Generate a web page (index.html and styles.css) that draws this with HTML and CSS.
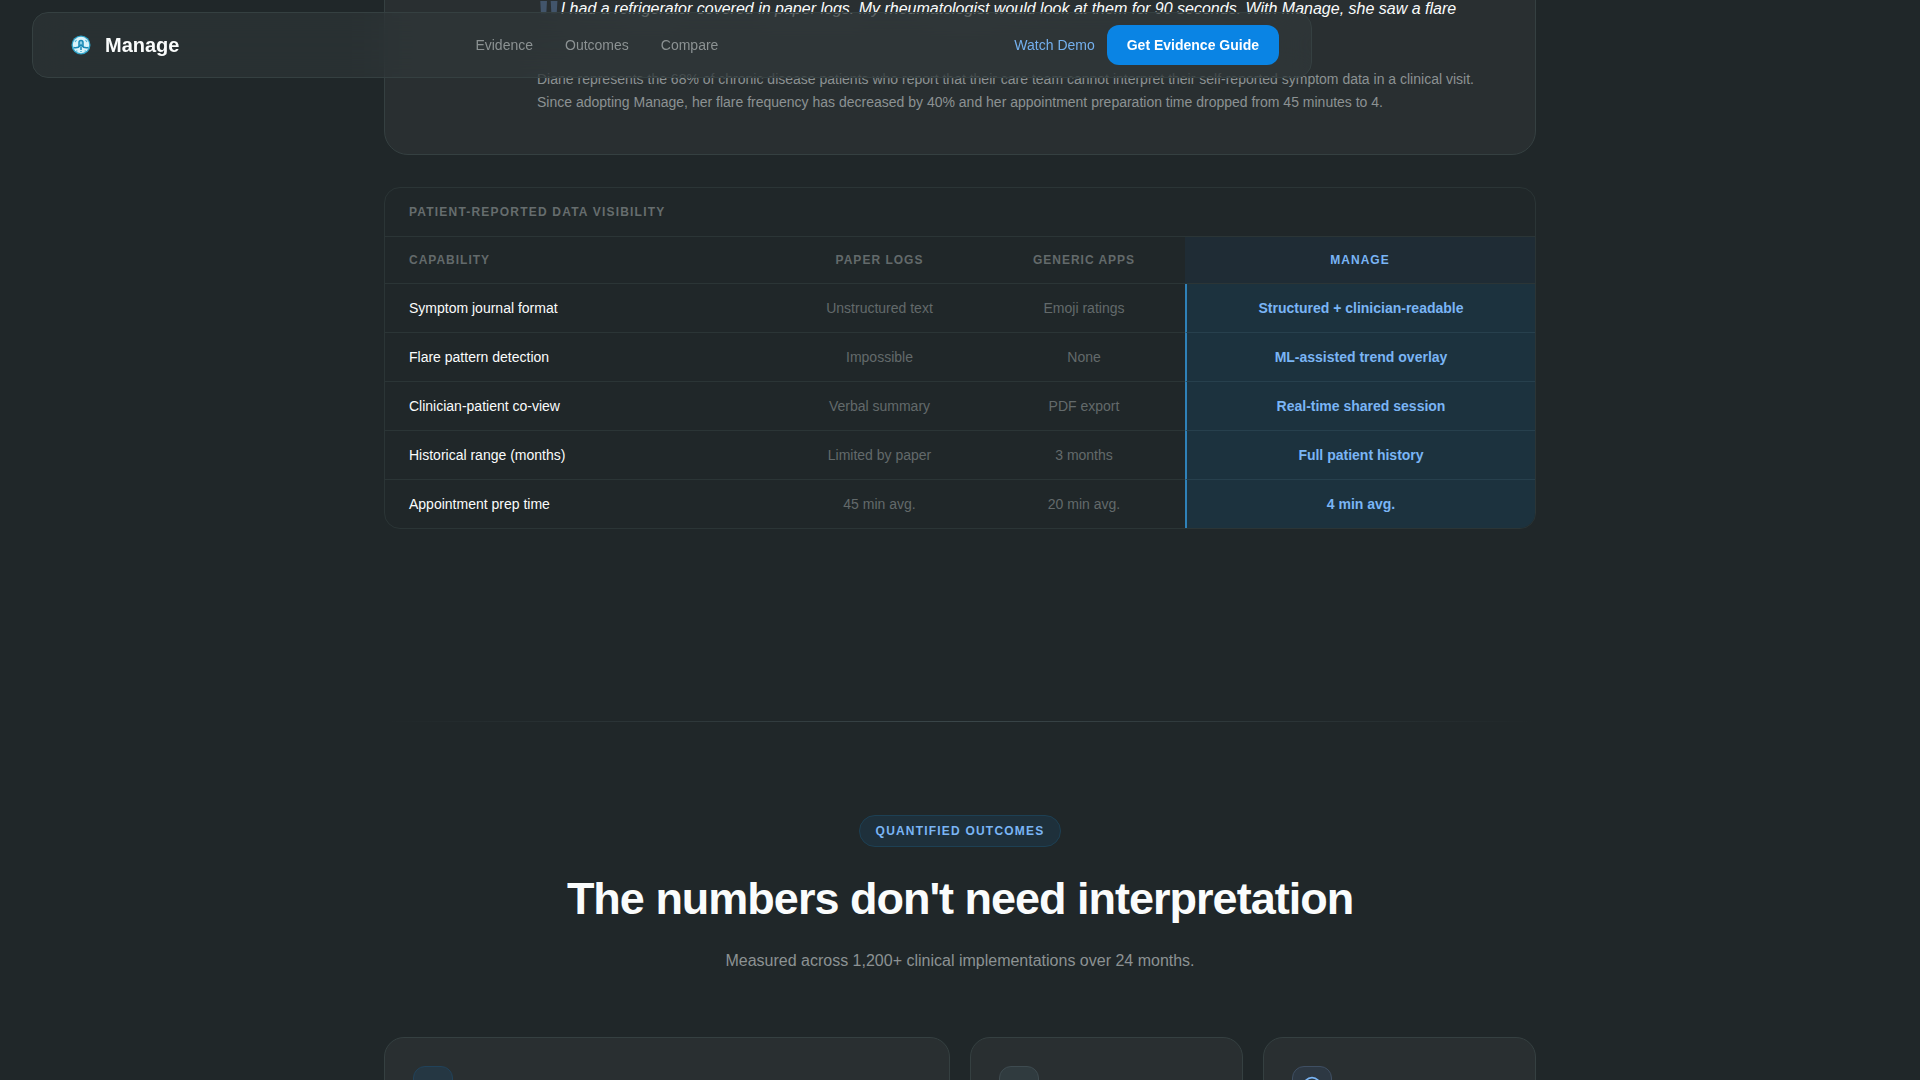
FILE: index.html
```html
<!DOCTYPE html>
<html lang="en">
<head>
    <meta charset="UTF-8">
    <meta name="viewport" content="width=device-width, initial-scale=1.0">
    <title>Manage</title>
    <link rel="stylesheet" href="styles.css">
</head>

<body>
    <header class="nav">
        <a href="#" class="brand">
            <svg class="brand-icon" viewBox="0 0 32 32" aria-hidden="true">
                <circle cx="16" cy="16" r="9.5" fill="#2fa3c9"/>
                <circle cx="16" cy="16" r="8.2" fill="#d9f3fa"/>
                <path d="M14 18v-4.500a2 2 0 0 1 4 0V18" fill="#8fd0e6" stroke="#1687b4" stroke-width="1.500"/>
                <path d="M8.500 18.500c3 .8 5.500 0 7.500-2.500 2 2.500 4.500 3.300 7.500 2.500M16 18v3" fill="none" stroke="#1687b4" stroke-width="1.500"/>
                <path d="M11 22h1.500M15.200 22.500h1.600M19.500 22H21M10 13l1.500-2M22 13l-1.500-2" fill="none" stroke="#49b3d6" stroke-width="1.100"/>
            </svg>
            <span>Manage</span>
        </a>
        <nav class="nav-links">
            <a href="#evidence">Evidence</a>
            <a href="#outcomes">Outcomes</a>
            <a href="#compare">Compare</a>
        </nav>
        <div class="nav-actions">
            <a href="#demo" class="demo-link">Watch Demo</a>
            <button type="button" class="btn-primary">Get Evidence Guide</button>
        </div>
    </header>

    <main class="container">
        <section class="story" id="evidence">
            <p class="story-quote"><span class="quote-mark">"</span>I had a refrigerator covered in paper logs. My rheumatologist would look at them for 90 seconds. With Manage, she saw a flare</p>
            <p class="story-text">Diane represents the 68% of chronic disease patients who report that their care team cannot interpret their self-reported symptom data in a clinical visit. Since adopting Manage, her flare frequency has decreased by 40% and her appointment preparation time dropped from 45 minutes to 4.</p>
        </section>

        <section class="compare" id="compare">
            <h3 class="compare-title">Patient-Reported Data Visibility</h3>
            <table class="compare-table">
                <thead>
                    <tr>
                        <th class="col-capability">Capability</th>
                        <th class="col-paper">Paper Logs</th>
                        <th>Generic Apps</th>
                        <th class="col-manage">Manage</th>
                    </tr>
                </thead>
                <tbody>
                    <tr>
                        <td>Symptom journal format</td>
                        <td>Unstructured text</td>
                        <td>Emoji ratings</td>
                        <td>Structured + clinician-readable</td>
                    </tr>
                    <tr>
                        <td>Flare pattern detection</td>
                        <td>Impossible</td>
                        <td>None</td>
                        <td>ML-assisted trend overlay</td>
                    </tr>
                    <tr>
                        <td>Clinician-patient co-view</td>
                        <td>Verbal summary</td>
                        <td>PDF export</td>
                        <td>Real-time shared session</td>
                    </tr>
                    <tr>
                        <td>Historical range (months)</td>
                        <td>Limited by paper</td>
                        <td>3 months</td>
                        <td>Full patient history</td>
                    </tr>
                    <tr>
                        <td>Appointment prep time</td>
                        <td>45 min avg.</td>
                        <td>20 min avg.</td>
                        <td>4 min avg.</td>
                    </tr>
                </tbody>
            </table>
        </section>

        <div class="divider"></div>

        <section class="outcomes" id="outcomes">
            <span class="pill">Quantified Outcomes</span>
            <h2>The numbers don't need interpretation</h2>
            <p class="outcomes-sub">Measured across 1,200+ clinical implementations over 24 months.</p>

            <div class="cards">
                <div class="card card-wide">
                    <div class="card-icon icon-blue"></div>
                </div>
                <div class="card">
                    <div class="card-icon icon-slate"></div>
                </div>
                <div class="card">
                    <div class="card-icon icon-navy">
                        <svg viewBox="0 0 24 24" width="20" height="20" fill="none" stroke="#7ab5f5" stroke-width="2" aria-hidden="true">
                            <circle cx="12" cy="12" r="10"/>
                            <path d="M12 6v6l4 2"/>
                        </svg>
                    </div>
                </div>
            </div>
        </section>
    </main>
</body>
</html>
```
FILE: styles.css
```css
* {
    margin: 0;
    padding: 0;
    box-sizing: border-box;
}

html {
    overflow: hidden;
}

body {
    height: 100vh;
    overflow: hidden;
    background: #202729;
    color: #fafcfc;
    font-family: "Liberation Sans", Arial, sans-serif;
    font-size: 14px;
}

a {
    text-decoration: none;
}

/* Nav */
.nav {
    position: fixed;
    top: 12px;
    left: 32px;
    z-index: 10;
    width: calc(100% - 64px);
    max-width: 1280px;
    display: flex;
    justify-content: space-between;
    align-items: center;
    padding: 12px 32px;
    border: 1px solid #354041;
    border-radius: 16px;
    background: rgba(50, 57, 59, 0.5);
    backdrop-filter: blur(20px);
}

.brand {
    display: flex;
    align-items: center;
    gap: 8px;
    color: #fafcfc;
    font-size: 20px;
    font-weight: bold;
}

.brand-icon {
    width: 32px;
    height: 32px;
}

.nav-links {
    display: flex;
    gap: 32px;
}

.nav-links a {
    color: #8c9293;
}

.nav-actions {
    display: flex;
    align-items: center;
    gap: 12px;
}

.demo-link {
    color: #74b0ee;
}

.btn-primary {
    padding: 12px 20px;
    border: none;
    border-radius: 12px;
    background: #0a84e4;
    color: #fff;
    font-family: inherit;
    font-size: 14px;
    font-weight: bold;
    line-height: 16px;
    cursor: pointer;
}

.container {
    width: 100%;
    max-width: 1200px;
    margin: 0 auto;
    padding: 0 24px;
}

/* Patient story */
.story {
    margin-top: -54px;
    padding: 48px 48px 40px 152px;
    border: 1px solid #354041;
    border-radius: 24px;
    background: #292f31;
}

.story-quote {
    min-height: 57px;
    margin-bottom: 16px;
    font-size: 16px;
    font-style: italic;
    line-height: 28px;
}

.quote-mark {
    color: #42556b;
    font-size: 50px;
    font-style: normal;
    font-weight: bold;
    line-height: 0;
    vertical-align: -22px;
}

.story-text {
    color: #8c9293;
    line-height: 23px;
}

/* Comparison table */
.compare {
    margin-top: 32px;
    border: 1px solid #2b3536;
    border-radius: 16px;
    overflow: hidden;
}

.compare-title {
    padding: 17px 24px;
    border-bottom: 1px solid #2b3536;
    color: #666d6e;
    font-size: 12px;
    letter-spacing: 0.1em;
    line-height: 14px;
    text-transform: uppercase;
}

.compare-table {
    width: 100%;
    border-collapse: separate;
    border-spacing: 0;
}

.compare-table th,
.compare-table td {
    padding: 16px 24px;
    border-bottom: 1px solid #2b3536;
    color: #636a6b;
    line-height: 16px;
    text-align: center;
}

.compare-table th {
    font-size: 12px;
    letter-spacing: 1px;
    line-height: 14px;
    text-transform: uppercase;
}

.compare-table .col-capability {
    width: 34%;
}

.compare-table .col-paper {
    width: 18%;
}

.compare-table th:first-child,
.compare-table td:first-child {
    text-align: left;
}

.compare-table td:first-child {
    color: #fafcfc;
}

.compare-table .col-manage {
    width: 350px;
    background: #1f2c35;
    color: #7ab5f5;
}

.compare-table td:last-child {
    border-left: 2px solid #2f81b8;
    border-bottom-color: #27404d;
    background: #1c323e;
    color: #7ab5f5;
    font-weight: bold;
}

.compare-table tbody tr:last-child td {
    border-bottom: none;
}

.divider {
    height: 1px;
    margin: 192px 0 93px;
    background: linear-gradient(90deg, transparent, #3a4649, transparent);
}

/* Outcomes */
.outcomes {
    text-align: center;
}

.pill {
    display: inline-block;
    padding: 8px 16px;
    border: 1px solid #1d4054;
    border-radius: 16px;
    background: #1e303b;
    color: #7ab5f5;
    font-size: 12px;
    font-weight: bold;
    letter-spacing: 0.1em;
    line-height: 14px;
    text-transform: uppercase;
}

.outcomes h2 {
    margin-top: 26px;
    font-size: 45px;
    letter-spacing: -1px;
    line-height: 52px;
}

.outcomes-sub {
    margin-top: 24px;
    color: #8c9293;
    font-size: 16px;
    line-height: 24px;
}

.cards {
    display: grid;
    grid-template-columns: repeat(4, 1fr);
    gap: 20px;
    margin-top: 64px;
}

.card {
    min-height: 260px;
    padding: 28px;
    border: 1px solid #354041;
    border-radius: 20px;
    background: #292f31;
}

.card-wide {
    grid-column: span 2;
}

.card-icon {
    display: flex;
    justify-content: center;
    align-items: center;
    width: 40px;
    height: 40px;
    border: 1px solid #3e4b50;
    border-radius: 12px;
}

.icon-blue {
    border-color: #21425a;
    background: #253743;
}

.icon-slate {
    background: #303b3f;
}

.icon-navy {
    border-color: #3f4f63;
    background: #2d3843;
}
```
